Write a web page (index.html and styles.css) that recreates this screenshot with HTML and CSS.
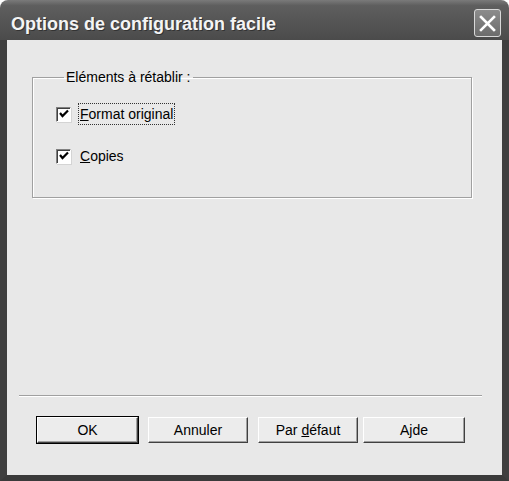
FILE: index.html
```html
<!DOCTYPE html>
<html lang="fr">

<head>
    <meta charset="UTF-8">
    <title>Options de configuration facile</title>
    <link rel="stylesheet" href="styles.css">
</head>

<body>
    <div class="window">
        <div class="titlebar">
            <span class="title">Options de configuration facile</span>
            <div class="close-btn">
                <svg width="17" height="17" viewBox="0 0 17 17">
                    <path d="M2 2 L15 15 M15 2 L2 15" stroke="#fff" stroke-width="2.6" stroke-linecap="square" />
                </svg>
            </div>
        </div>
        <div class="client">
            <fieldset class="group">
                <legend>Eléments à rétablir :</legend>
                <label class="check">
                    <span class="box">
                        <svg width="12" height="12" viewBox="0 0 12 12">
                            <path d="M2 5 L4.5 8 L10 2.5" stroke="#000" stroke-width="2.2" fill="none" />
                        </svg>
                    </span>
                    <span class="text focus"><u>F</u>ormat original</span>
                </label>
                <label class="check">
                    <span class="box">
                        <svg width="12" height="12" viewBox="0 0 12 12">
                            <path d="M2 5 L4.5 8 L10 2.5" stroke="#000" stroke-width="2.2" fill="none" />
                        </svg>
                    </span>
                    <span class="text"><u>C</u>opies</span>
                </label>
            </fieldset>
            <div class="spacer"></div>
            <div class="separator"></div>
            <div class="buttons">
                <div class="btn default"><span>OK</span></div>
                <div class="btn"><span>Annuler</span></div>
                <div class="btn"><span>Par <u>d</u>éfaut</span></div>
                <div class="btn help"><span>A<u>j</u>de</span></div>
            </div>
        </div>
    </div>
</body>

</html>
```

FILE: styles.css
```css
body {
    margin: 0;
    background: #fff;
    font-family: "Liberation Sans", Arial, sans-serif;
    font-size: 14px;
    color: #000;
}

.window {
    width: 509px;
    height: 481px;
    display: flex;
    flex-direction: column;
}

.titlebar {
    height: 40px;
    flex-shrink: 0;
    display: flex;
    align-items: center;
    justify-content: space-between;
    padding: 6px 8px 0 11px;
    box-sizing: border-box;
    border-radius: 8px 8px 0 0;
    background: linear-gradient(to bottom, #7a7a7a 0%, #5e5e5e 14%, #565656 50%, #4b4b4b 100%);
}

.title {
    color: #f4f4f4;
    font-weight: bold;
    font-size: 18px;
    padding-top: 3px;
    text-shadow: 1px 1px 0 #333;
}

.close-btn {
    width: 25px;
    height: 26px;
    border: 1px solid #d8d8d8;
    border-radius: 3px;
    background: linear-gradient(to bottom, #8c8c8c, #6c6c6c);
    display: flex;
    align-items: center;
    justify-content: center;
}

.client {
    flex: 1;
    background: #e8e8e8;
    border-left: 7px solid #3f3f3f;
    border-right: 7px solid #3f3f3f;
    border-bottom: 6px solid #3a3a3a;
    display: flex;
    flex-direction: column;
    padding-top: 30px;
}

.group {
    box-sizing: border-box;
    width: 440px;
    height: 128px;
    margin: 0 0 0 25px;
    padding: 17px 0 0 23px;
    border: 1px solid #a0a0a0;
    box-shadow: inset 1px 1px 0 #fff, 1px 1px 0 #fff;
    display: flex;
    flex-direction: column;
    gap: 18px;
}

.group legend {
    margin-left: 8px;
    padding: 0 2px;
    line-height: 15px;
}

.check {
    display: flex;
    align-items: center;
    height: 24px;
}

.box {
    width: 13px;
    height: 13px;
    background: #fff;
    border: 1px solid;
    border-color: #808080 #fff #fff #808080;
    box-shadow: inset 1px 1px 0 #404040, 1px 1px 0 #d4d4d4;
    display: flex;
    align-items: center;
    justify-content: center;
}

.text {
    margin-left: 7px;
    padding: 2px 1px;
    border: 1px dotted transparent;
}

.text.focus {
    border-color: #333;
}

.spacer {
    flex: 1;
}

.separator {
    height: 1px;
    margin: 0 20px 0 12px;
    background: #a0a0a0;
    border-bottom: 1px solid #fff;
}

.buttons {
    display: flex;
    gap: 10px;
    padding: 20px 0 32px 30px;
}

.btn {
    width: 100px;
    height: 26px;
    box-sizing: border-box;
    display: flex;
    align-items: center;
    justify-content: center;
    background: #ececec;
    border: 1px solid;
    border-color: #fff #404040 #404040 #fff;
    box-shadow: inset -1px -1px 0 #a0a0a0;
}

.btn.default {
    width: 101px;
    outline: 1px solid #000;
}

.btn.help {
    margin-left: -5px;
    width: 102px;
}
```
